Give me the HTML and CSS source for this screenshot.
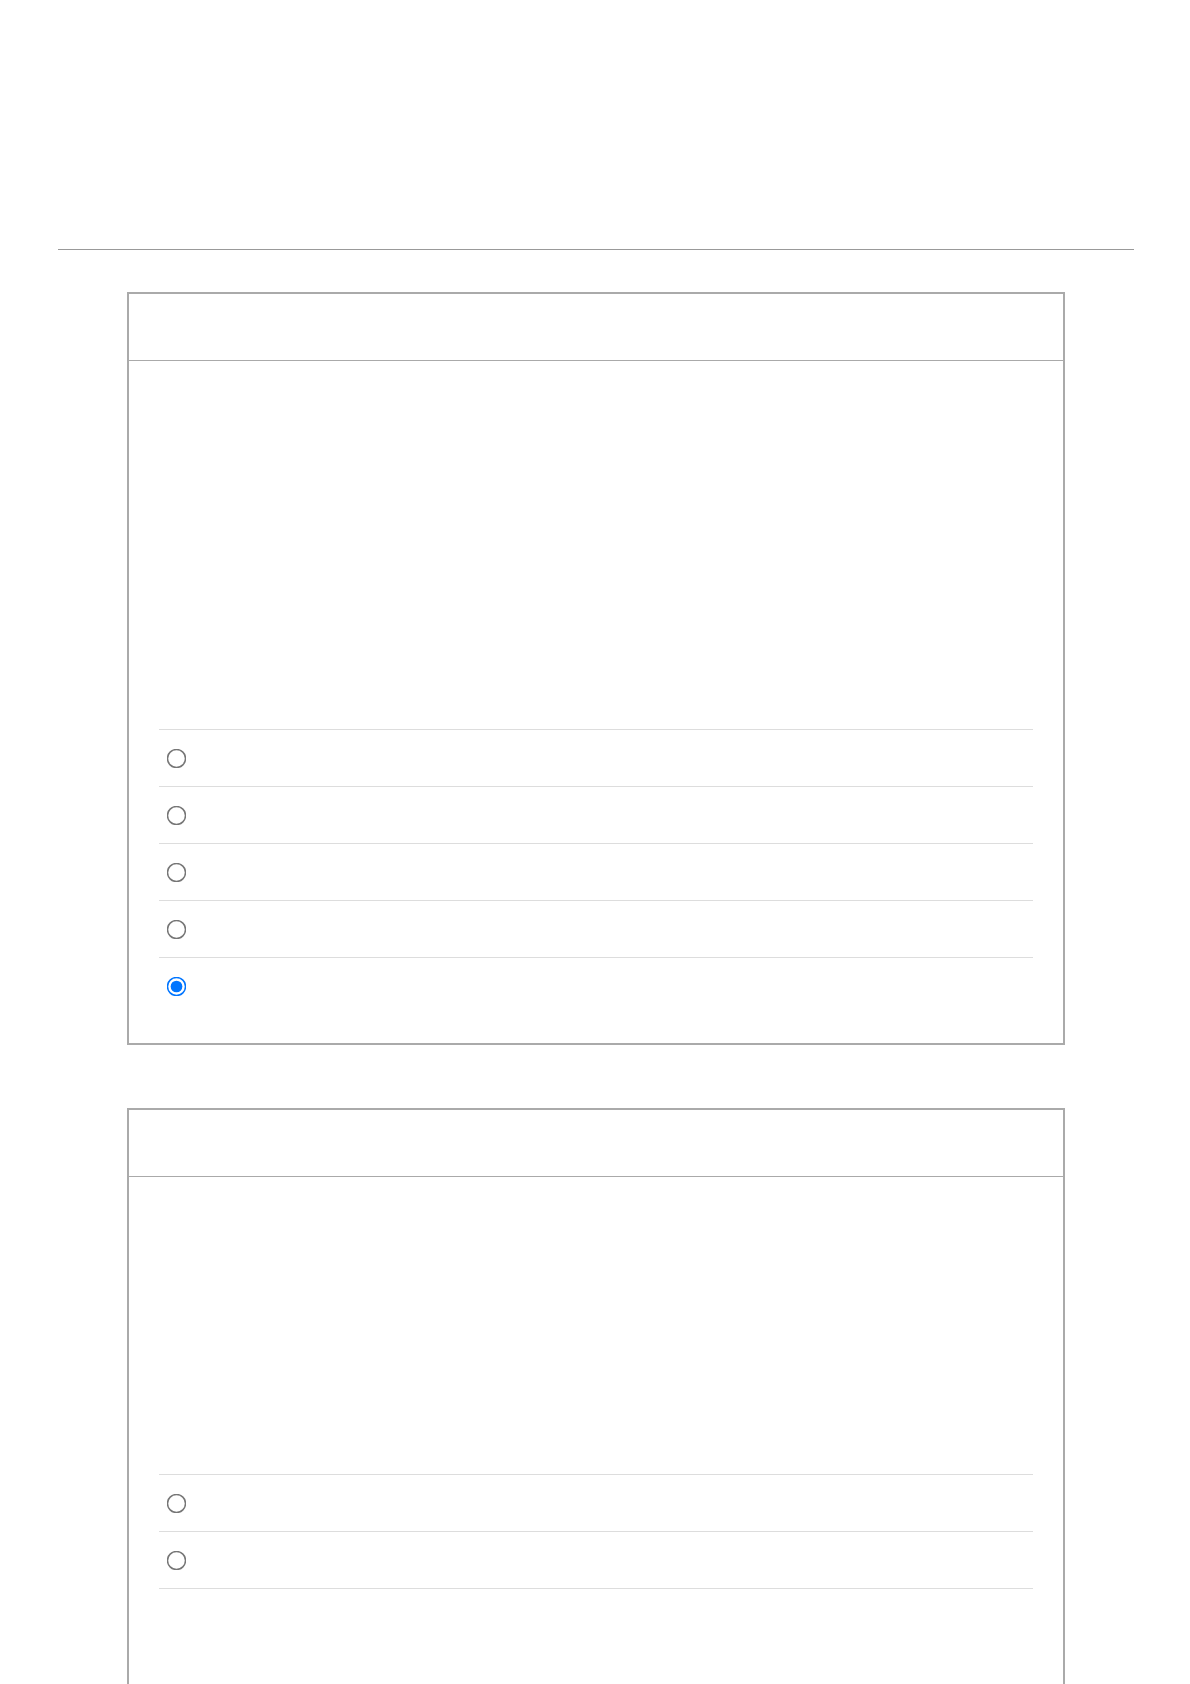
FILE: index.html
```html
<!DOCTYPE html>
<html>
<head>
	<title>Survey</title>
	<meta charset="UTF-8">
	<link rel="stylesheet" href="styles.css">
</head>
<body>
	<hr class="rule">

	<div class="card">
		<div class="card-head"></div>
		<div class="card-body tall">
			<ul class="options">
				<li><input type="radio" name="q1"></li>
				<li><input type="radio" name="q1"></li>
				<li><input type="radio" name="q1"></li>
				<li><input type="radio" name="q1"></li>
				<li><input type="radio" name="q1" checked></li>
			</ul>
		</div>
	</div>

	<div class="card">
		<div class="card-head"></div>
		<div class="card-body short">
			<ul class="options">
				<li><input type="radio" name="q2"></li>
				<li><input type="radio" name="q2"></li>
				<li class="empty"></li>
			</ul>
		</div>
	</div>
</body>
</html>
```

FILE: styles.css
```css
body {
	box-sizing: border-box;
	font: 1em "Liberation Sans", Arial, sans-serif;
	margin: 0;
	background: #fff;
}

.rule {
	margin: 249px 56px 0 58px;
	border: none;
	border-top: 1px solid #999;
	height: 0;
}

.card {
	width: 938px;
	margin: 42px 0 0 127px;
	border: 2px solid #aaa;
	box-sizing: border-box;
}

.card + .card {
	margin-top: 63px;
}

.card-head {
	height: 66px;
	border-bottom: 1px solid #aaa;
}

.card-body {
	padding: 0 30px 29px;
}

.card-body.tall {
	padding-top: 368px;
}

.card-body.short {
	padding-top: 297px;
}

.options {
	list-style: none;
	margin: 0;
	padding: 0;
}

.options li {
	display: flex;
	align-items: center;
	height: 57px;
	box-sizing: border-box;
	border-top: 1px solid #ddd;
}

.options li.empty {
	height: 160px;
}

.options input {
	width: 13px;
	height: 13px;
	margin: 0 0 0 10.5px;
	transform: scale(1.5);
}
```
